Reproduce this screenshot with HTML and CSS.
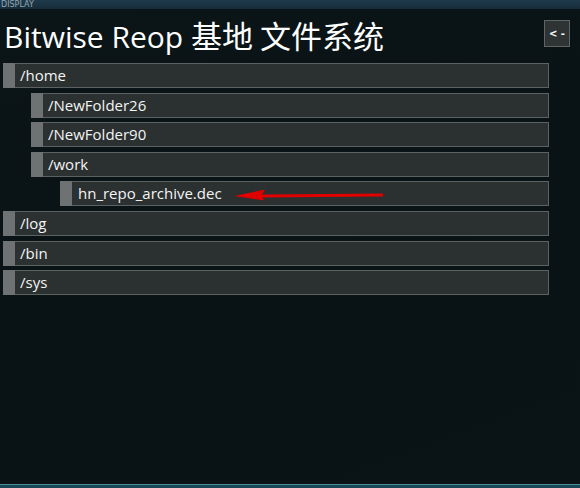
FILE: index.html
```html
<!DOCTYPE html>
<html lang="zh">
<head>
  <meta charset="UTF-8" />
  <title>Bitwise Reop 基地 文件系统</title>
  <link rel="stylesheet" href="styles.css">
</head>
<body>
  <div class="topbar">DISPLAY</div>

  <div class="header">
    <h1>Bitwise Reop <span class="cjk">基地 文件系统</span></h1>
    <button class="back">&lt; -</button>
  </div>

  <div class="tree">
    <div class="row"><span class="tab"></span><span class="name">/home</span></div>
    <div class="row lvl1"><span class="tab"></span><span class="name">/NewFolder26</span></div>
    <div class="row lvl1"><span class="tab"></span><span class="name">/NewFolder90</span></div>
    <div class="row lvl1"><span class="tab"></span><span class="name">/work</span></div>
    <div class="row lvl2 file">
      <span class="tab"></span><span class="name">hn_repo_archive.dec</span>
      <svg class="arrow" width="160" height="14" viewBox="0 0 160 14">
        <path d="M1 8 L32 1.5 L29 6.5 L150 5.5 L150 8.5 L29 9.5 L32 12.5 Z" fill="#e00000"/>
      </svg>
    </div>
    <div class="row"><span class="tab"></span><span class="name">/log</span></div>
    <div class="row"><span class="tab"></span><span class="name">/bin</span></div>
    <div class="row"><span class="tab"></span><span class="name">/sys</span></div>
  </div>

  <div class="bottomline"></div>
</body>
</html>
```

FILE: styles.css
```css
* {
  box-sizing: border-box;
}
html, body {
  height: 100%;
}
body {
  margin: 0;
  font-family: 'Open Sans', 'Noto Sans', 'Noto Sans CJK SC', sans-serif;
  background: linear-gradient(160deg, #0b1517 0%, #091214 55%, #0a1416 100%);
  color: #fff;
  display: flex;
  flex-direction: column;
  overflow: hidden;
}

.topbar {
  height: 9px;
  background: linear-gradient(180deg, #1f3a4c, #162c3a);
  color: #93a8b2;
  font-family: 'DejaVu Sans', sans-serif;
  font-size: 8px;
  line-height: 9px;
  padding-left: 1px;
}

.header {
  display: flex;
  align-items: flex-start;
  justify-content: space-between;
  padding: 10px 10px 0 4px;
  height: 54px;
}

h1 {
  margin: 0;
  font-weight: 400;
  font-size: 30px;
  line-height: 32px;
  font-family: 'Open Sans', 'Noto Sans CJK SC', sans-serif;
}
h1 .cjk {
  font-size: 31px;
  font-family: 'Noto Sans CJK SC', sans-serif;
}

.back {
  width: 26px;
  height: 27px;
  margin-top: 1px;
  background: #2e3333;
  border: 1px solid #5f6464;
  color: #fff;
  font-family: 'DejaVu Sans', sans-serif;
  font-weight: bold;
  font-size: 10px;
  padding: 0;
}

.tree {
  display: flex;
  flex-direction: column;
  gap: 4.6px;
  padding: 0 31px 0 3px;
}

.row {
  position: relative;
  display: flex;
  align-items: stretch;
  height: 25px;
  background: #2b3030;
  border: 1px solid #5c6161;
  border-left: none;
}
.row.lvl1 {
  margin-left: 28px;
}
.row.lvl2 {
  margin-left: 57px;
}

.tab {
  width: 12px;
  margin-top: -1px;
  margin-bottom: -1px;
  background: #6e7272;
  flex-shrink: 0;
}

.name {
  padding-left: 5px;
  font-size: 15px;
  line-height: 23px;
  color: #f4f4f4;
}
.file .name {
  padding-left: 6px;
}

.arrow {
  position: absolute;
  left: 173px;
  top: 6px;
}

.bottomline {
  margin-top: auto;
  height: 4px;
  border-top: 1px solid #4f8a95;
  background: #17485a;
}
```
